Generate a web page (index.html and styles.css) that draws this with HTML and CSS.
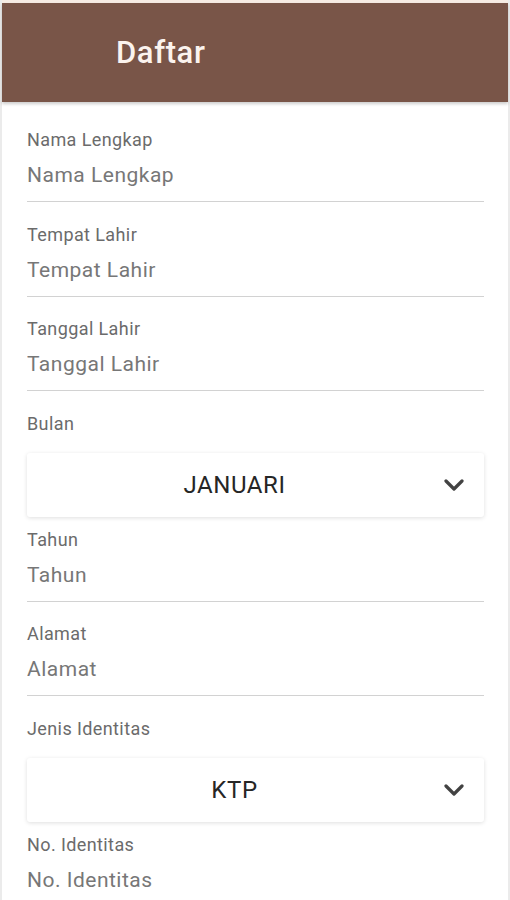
FILE: index.html
```html
<!DOCTYPE html>
<html>
<head>
	<title>Daftar</title>
	<link rel="stylesheet" href="styles.css">
</head>
<body>
	<div class="page">
		<div class="toolbar">
			<h1>Daftar</h1>
		</div>

		<div class="form">
			<div class="field">
				<label>Nama Lengkap</label>
				<input type="text" placeholder="Nama Lengkap">
			</div>
			<div class="field">
				<label>Tempat Lahir</label>
				<input type="text" placeholder="Tempat Lahir">
			</div>
			<div class="field">
				<label>Tanggal Lahir</label>
				<input type="text" placeholder="Tanggal Lahir">
			</div>
			<div class="field pick">
				<label>Bulan</label>
				<div class="select">
					<span class="value">JANUARI</span>
					<span class="arrow">
						<svg width="20" height="12" viewBox="0 0 20 12"><path d="M2 2 L10 10 L18 2" fill="none" stroke="#424242" stroke-width="3.2" stroke-linecap="round" stroke-linejoin="round"/></svg>
					</span>
				</div>
			</div>
			<div class="field">
				<label>Tahun</label>
				<input type="text" placeholder="Tahun">
			</div>
			<div class="field">
				<label>Alamat</label>
				<input type="text" placeholder="Alamat">
			</div>
			<div class="field pick">
				<label>Jenis Identitas</label>
				<div class="select">
					<span class="value">KTP</span>
					<span class="arrow">
						<svg width="20" height="12" viewBox="0 0 20 12"><path d="M2 2 L10 10 L18 2" fill="none" stroke="#424242" stroke-width="3.2" stroke-linecap="round" stroke-linejoin="round"/></svg>
					</span>
				</div>
			</div>
			<div class="field">
				<label>No. Identitas</label>
				<input type="text" placeholder="No. Identitas">
			</div>
		</div>
	</div>
</body>
</html>
```

FILE: styles.css
```css
body {
	margin: 0;
	background: #fff;
	font-family: Roboto, "Liberation Sans", sans-serif;
}

.page {
	min-height: 900px;
	padding-top: 3px;
	border-left: 2px solid #ebebeb;
	border-right: 2px solid #ebebeb;
	background: linear-gradient(#f6ebe3 0, #f6ebe3 3px, #fff 3px);
	box-sizing: border-box;
}

.toolbar {
	height: 99px;
	background: #795548;
	display: flex;
	align-items: center;
	padding-left: 114px;
	box-shadow: 0 2px 3px rgba(0, 0, 0, 0.2);
}

.toolbar h1 {
	margin: 0;
	color: #fbf3ee;
	font-size: 31px;
	font-weight: 500;
	letter-spacing: 0.6px;
}

.form {
	padding: 28px 24px 0 25px;
	display: flex;
	flex-direction: column;
}

.field {
	display: flex;
	flex-direction: column;
	margin-bottom: 22.5px;
}

.field label {
	font-size: 18px;
	line-height: 20px;
	letter-spacing: 0.4px;
	color: #6b6b6b;
	margin-bottom: 12px;
}

.field input {
	border: none;
	border-bottom: 1px solid #d2d2d2;
	padding: 0 0 13px 0;
	font-family: Roboto, "Liberation Sans", sans-serif;
	font-size: 21px;
	line-height: 26px;
	letter-spacing: 0.5px;
	outline: none;
	background: transparent;
}

.field input::placeholder {
	color: #777;
}

.field.pick {
	margin-bottom: 13px;
}

.field.pick label {
	margin-bottom: 19px;
}

.select {
	height: 64px;
	display: flex;
	align-items: center;
	background: #fff;
	border-radius: 3px;
	box-shadow: 0 1px 4px rgba(0, 0, 0, 0.13);
}

.select .value {
	flex: 1;
	text-align: center;
	font-size: 24px;
	letter-spacing: 0.6px;
	color: #262626;
	padding-left: 14px;
}

.select .arrow {
	width: 52px;
	display: flex;
	justify-content: center;
	padding-right: 4px;
}
```
